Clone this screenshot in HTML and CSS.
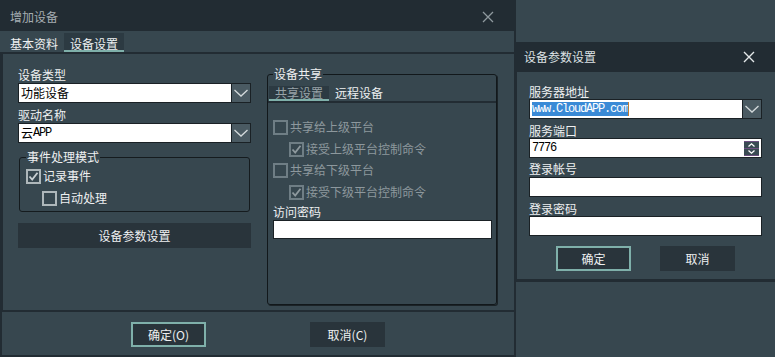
FILE: index.html
```html
<!DOCTYPE html>
<html lang="zh-CN">
<head>
    <meta charset="UTF-8">
    <meta name="viewport" content="width=device-width, initial-scale=1.0">
    <title>增加设备</title>
    <link rel="stylesheet" href="styles.css">
</head>
<body>
<div class="desk">
    <div class="main">
        <div class="titlebar">
            <span class="title">增加设备</span>
            <svg class="close" width="12" height="12" viewBox="0 0 12 12"><path d="M1 1L11 11M11 1L1 11" stroke="#8f999e" stroke-width="1.3"/></svg>
        </div>
        <div class="tabs">
            <span class="tab">基本资料</span>
            <span class="tab active">设备设置</span>
        </div>
        <div class="content">
            <div class="left">
                <div class="label">设备类型</div>
                <div class="combo">
                    <span class="field">功能设备</span>
                    <span class="arrow"><svg width="18" height="18" viewBox="0 0 18 18"><path d="M2.5 6L9 12L15.5 6" fill="none" stroke="#d3d9db" stroke-width="1.3"/></svg></span>
                </div>
                <div class="label gap">驱动名称</div>
                <div class="combo">
                    <span class="field">云<span class="mono">APP</span></span>
                    <span class="arrow"><svg width="18" height="18" viewBox="0 0 18 18"><path d="M2.5 6L9 12L15.5 6" fill="none" stroke="#d3d9db" stroke-width="1.3"/></svg></span>
                </div>
                <fieldset class="group">
                    <legend>事件处理模式</legend>
                    <div class="check">
                        <svg width="15" height="15" viewBox="0 0 15 15"><rect x="1" y="1" width="13" height="13" fill="none" stroke="#aeb7ba" stroke-width="2"/><path d="M3.5 7.5L6.2 10.5L11.5 3.8" fill="none" stroke="#c9d0d3" stroke-width="1.8"/></svg>
                        <span>记录事件</span>
                    </div>
                    <div class="check sub">
                        <svg width="15" height="15" viewBox="0 0 15 15"><rect x="1" y="1" width="13" height="13" fill="none" stroke="#aeb7ba" stroke-width="2"/></svg>
                        <span>自动处理</span>
                    </div>
                </fieldset>
                <div class="btn wide">设备参数设置</div>
            </div>
            <fieldset class="group share">
                <legend>设备共享</legend>
                <div class="subtabs">
                    <span class="subtab active">共享设置</span>
                    <span class="subtab">远程设备</span>
                </div>
                <div class="pane">
                    <div class="check off">
                        <svg width="15" height="15" viewBox="0 0 15 15"><rect x="1" y="1" width="13" height="13" fill="none" stroke="#6f7e85" stroke-width="2"/></svg>
                        <span>共享给上级平台</span>
                    </div>
                    <div class="check off sub r2">
                        <svg width="15" height="15" viewBox="0 0 15 15"><rect x="1" y="1" width="13" height="13" fill="none" stroke="#6f7e85" stroke-width="2"/><path d="M3.5 7.5L6.2 10.5L11.5 3.8" fill="none" stroke="#8e999e" stroke-width="1.8"/></svg>
                        <span>接受上级平台控制命令</span>
                    </div>
                    <div class="check off r3">
                        <svg width="15" height="15" viewBox="0 0 15 15"><rect x="1" y="1" width="13" height="13" fill="none" stroke="#6f7e85" stroke-width="2"/></svg>
                        <span>共享给下级平台</span>
                    </div>
                    <div class="check off sub r2">
                        <svg width="15" height="15" viewBox="0 0 15 15"><rect x="1" y="1" width="13" height="13" fill="none" stroke="#6f7e85" stroke-width="2"/><path d="M3.5 7.5L6.2 10.5L11.5 3.8" fill="none" stroke="#8e999e" stroke-width="1.8"/></svg>
                        <span>接受下级平台控制命令</span>
                    </div>
                    <div class="label pw">访问密码</div>
                    <div class="input pwbox"></div>
                </div>
            </fieldset>
        </div>
        <div class="footer">
            <div class="btn primary">确定(O)</div>
            <div class="btn">取消(C)</div>
        </div>
    </div>

    <div class="side">
        <div class="backdrop top"></div>
        <div class="dialog">
            <div class="titlebar small">
                <span class="title">设备参数设置</span>
                <svg class="close" width="12" height="12" viewBox="0 0 12 12"><path d="M1 1L11 11M11 1L1 11" stroke="#e4e8ea" stroke-width="1.4"/></svg>
            </div>
            <div class="body">
                <div class="label first">服务器地址</div>
                <div class="combo">
                    <span class="field"><span class="mono sel">www.CloudAPP.com</span><span class="caret"></span></span>
                    <span class="arrow"><svg width="18" height="18" viewBox="0 0 18 18"><path d="M2.5 6L9 12L15.5 6" fill="none" stroke="#d3d9db" stroke-width="1.3"/></svg></span>
                </div>
                <div class="label gap">服务端口</div>
                <div class="input spin">
                    <span class="mono">7776</span>
                    <svg width="15" height="15" viewBox="0 0 15 15"><rect width="15" height="15" fill="#3a4b53"/><path d="M0 0.5H15M0 7.5H15M0 14.5H15" stroke="#6d4f80" stroke-width="1"/><path d="M4.5 5.5L7.5 2.8L10.5 5.5M4.5 9.5L7.5 12.2L10.5 9.5" fill="none" stroke="#ffffff" stroke-width="1.3"/></svg>
                </div>
                <div class="label l3">登录帐号</div>
                <div class="input i3"></div>
                <div class="label gap">登录密码</div>
                <div class="input"></div>
                <div class="buttons">
                    <div class="btn primary">确定</div>
                    <div class="btn">取消</div>
                </div>
            </div>
        </div>
        <div class="backdrop bottom"></div>
    </div>
</div>
</body>
</html>
```

FILE: styles.css
```css
body {
    margin: 0;
    background-color: #222c33;
    font-family: "Noto Sans CJK SC", "Noto Sans", sans-serif;
    font-size: 12px;
    color: #eef0f1;
}

.desk {
    display: flex;
    width: 775px;
    height: 357px;
    overflow: hidden;
}

.main {
    width: 514px;
    flex: none;
}

.titlebar {
    height: 31px;
    box-sizing: border-box;
    padding: 2px 20px 0 10px;
    display: flex;
    align-items: center;
    justify-content: space-between;
    color: #a5adb1;
    line-height: 14px;
}

.close {
    display: block;
}

.tabs {
    height: 21px;
    background-color: #37474f;
    display: flex;
    align-items: flex-end;
    padding-left: 8px;
}

.tab {
    padding: 5px 2px 0;
    line-height: 12px;
    height: 19px;
    box-sizing: border-box;
    border-bottom: 2px solid transparent;
}

.tab.active {
    margin-left: 4px;
    padding: 5px 6px 0;
    background-color: #2c3a42;
    border-bottom-color: #7fb0aa;
}

.content {
    margin: 2px 0 0 3px;
    height: 256px;
    box-sizing: border-box;
    padding: 13px 0 0 15px;
    background-color: #37474f;
    display: flex;
    align-items: flex-start;
    gap: 16px;
}

.left {
    width: 233px;
}

.label {
    line-height: 16px;
    height: 16px;
}

.label.gap {
    margin-top: 4px;
}

.combo {
    display: flex;
    height: 20px;
    box-sizing: border-box;
    border: 1px solid #1a2125;
    background-color: #1a2125;
}

.field {
    flex: 1;
    background-color: #ffffff;
    color: #000000;
    padding-left: 2px;
    line-height: 18px;
    display: flex;
    align-items: center;
}

.arrow {
    width: 18px;
    margin-left: 1px;
    background-color: #4a5a62;
}

.arrow svg {
    display: block;
}

.mono {
    font-family: "Liberation Mono", monospace;
    font-size: 12px;
    letter-spacing: -1.2px;
}

.group {
    margin: 7px 1px 0;
    padding: 4px 0 5px 6px;
    border: 1px solid #151b1e;
    border-radius: 3px;
}

.group legend {
    padding: 0 1px;
    line-height: 14px;
}

.check {
    display: flex;
    align-items: center;
    gap: 2px;
    height: 16px;
    line-height: 16px;
}

.check svg {
    display: block;
}

.check.sub {
    margin-left: 16px;
    margin-top: 6px;
}

.check.off {
    color: #8d989d;
}

.btn {
    width: 75px;
    height: 25px;
    box-sizing: border-box;
    background-color: #29343b;
    display: flex;
    align-items: center;
    justify-content: center;
}

.btn.primary {
    border: 2px solid #7fb0aa;
}

.btn.wide {
    width: 233px;
    margin-top: 11px;
}

.share {
    width: 230px;
    box-sizing: border-box;
    margin: 0;
    padding: 5px 0 0;
    border: 1px solid #12181b;
    box-shadow: 1px 1px 0 #1b2327;
}

.share legend {
    margin-left: 5px;
}

.subtabs {
    display: flex;
    border-bottom: 2px solid #222c33;
}

.subtab {
    height: 15px;
    box-sizing: border-box;
    padding: 1px 6px 0;
    line-height: 12px;
    border-bottom: 2px solid transparent;
}

.subtab.active {
    margin-left: 1px;
    background-color: #2c3a42;
    color: #98a3a8;
    border-bottom-color: #7fb0aa;
}

.pane {
    height: 201px;
    box-sizing: border-box;
    padding: 16px 0 0 5px;
}

.check.r2 {
    margin-top: 6px;
}

.check.r3 {
    margin-top: 5px;
}

.label.pw {
    margin-top: 4px;
}

.input {
    height: 20px;
    box-sizing: border-box;
    border: 1px solid #1a2125;
    background-color: #ffffff;
    color: #000000;
}

.pwbox {
    width: 219px;
    height: 19px;
}

.footer {
    margin: 2px 0 0 2px;
    height: 43px;
    box-sizing: border-box;
    padding-top: 10px;
    background-color: #37474f;
    display: flex;
    justify-content: center;
    gap: 104px;
}

.side {
    flex: 1;
    margin-left: 2px;
    display: flex;
    flex-direction: column;
}

.backdrop {
    background-color: #37474f;
}

.backdrop.top {
    height: 42px;
}

.backdrop.bottom {
    flex: 1;
    margin-top: 3px;
}

.titlebar.small {
    height: 30px;
    padding: 0 20px 0 8px;
    color: #dde1e3;
}

.body {
    background-color: #37474f;
    border-left: 1px solid #222c33;
    padding: 12px 13px 8px 12px;
}

.body .label {
    height: 15px;
    line-height: 15px;
}

.body .label.l3 {
    margin-top: 3px;
}

.input.i3 {
    margin-top: 1px;
}

.sel {
    background-color: #3a8ad6;
    color: #ffffff;
    line-height: 14px;
}

.caret {
    width: 1px;
    height: 14px;
    background-color: #c07a30;
}

.spin {
    display: flex;
    align-items: center;
    justify-content: space-between;
    padding: 0 2px 0 2px;
}

.spin svg {
    display: block;
}

.buttons {
    margin-top: 10px;
    display: flex;
    justify-content: center;
    gap: 29px;
}
```
